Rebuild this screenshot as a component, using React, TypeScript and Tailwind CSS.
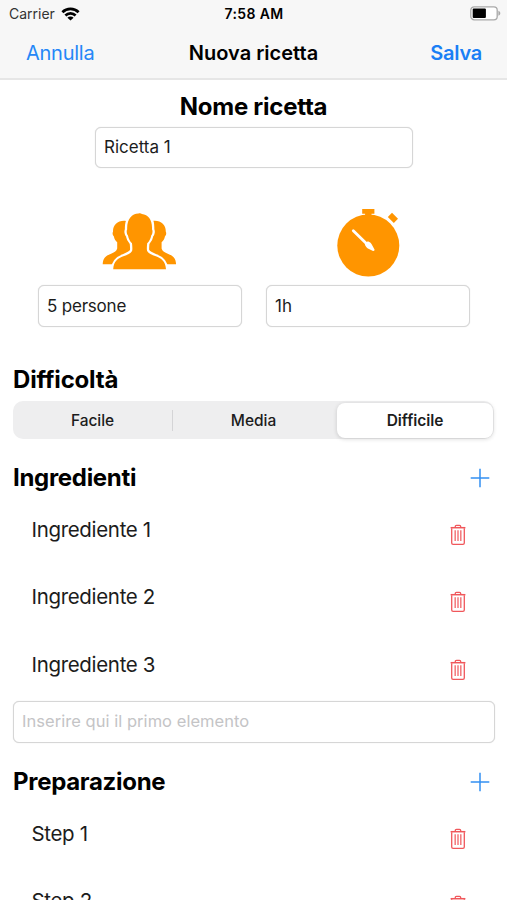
import React from "react";

function WifiIcon() {
  return (
    <svg width="19" height="14" viewBox="0 0 18 14" fill="none" stroke="#000" strokeWidth="2.7">
      <path d="M0.9 5.2a11.5 11.5 0 0 1 16.2 0" />
      <path d="M3.9 8.500a7.2 7.2 0 0 1 10.2 0" />
      <path d="M9 13.6L5.9 10.7a4.4 4.4 0 0 1 6.2 0z" fill="#000" stroke="none" />
    </svg>
  );
}

function BatteryIcon() {
  return (
    <svg width="31" height="15" viewBox="0 0 31 15">
      <rect x="0.8" y="0.8" width="26.4" height="13" rx="3.4" fill="#fff" stroke="#a9a9a9" strokeWidth="1.3" />
      <rect x="2.7" y="2.6" width="13.2" height="9.4" rx="1" fill="#000" />
      <path d="M28.4 4.8c1.2.4 1.9 1.3 1.9 2.5s-.7 2.1-1.9 2.5z" fill="#a9a9a9" />
    </svg>
  );
}

const SIDE_FIGURE =
  "M24 8.900C16 8 10.800 12.500 11 19.800c-.8.900-.4 3.700.9 4.700.4 2.400 1.500 4.200 3.300 5.700v6.300c-.7 2.700-2.700 3.700-5.600 4.900C4.700 43.300.9 45.500.7 52.300H34V12z";

function PeopleIcon() {
  return (
    <svg width="76" height="58" viewBox="0 0 76 58" fill="#ff9500">
      <path d={SIDE_FIGURE} />
      <path d={SIDE_FIGURE} transform="translate(74.8 0) scale(-1 1)" />
      <path
        d="M36.500 1.500c1-.6 2.600-.5 3.400.6C46.500 3 50.500 8 50 17.500c.9 1 .6 4.700-.8 5.900-.5 3.300-1.900 5.600-4 7.900-.3 2.700-.6 5.800-.1 7.700 1.700 2.800 5 3.900 8.700 5.300 5.300 2 9.700 4.700 10.200 13H11.200c.5-8.300 4.900-11 10.200-13 3.700-1.400 7-2.500 8.700-5.300.5-1.900.2-5-.1-7.700-2.100-2.300-3.500-4.600-4-7.900-1.400-1.200-1.700-4.900-.8-5.900C24.700 7.500 29.500 1.800 36.500 1.500z"
        stroke="#fff"
        strokeWidth="4.6"
        strokeLinejoin="round"
        paintOrder="stroke"
      />
    </svg>
  );
}

function StopwatchIcon() {
  return (
    <svg width="64" height="70" viewBox="0 0 64 70" fill="#ff9500">
      <path d="M26.200 1h12.200v4.800h-2.900v3.400h-6.400V5.800h-2.900z" />
      <path d="M51.800 8.900l4.200-4.200 6 6-4.200 4.200z" />
      <circle cx="32.300" cy="37.500" r="31" />
      <path d="M17.300 22.700L34.500 39.500" stroke="#fff" strokeWidth="2.8" strokeLinecap="round" />
      <path d="M28.800 36.200l3-3c2.200.8 3.700 2 4.400 4.100l2.300 4.200c.3.900-.5 1.700-1.500 1.400l-4-2c-2.200-.8-3.600-2.500-4.200-4.700z" fill="#fff" />
    </svg>
  );
}

function PlusIcon() {
  return (
    <svg width="20" height="20" viewBox="0 0 20 20" stroke="#3390f2" strokeWidth="1.5">
      <path d="M10 .7v18.600M.7 10h18.600" />
    </svg>
  );
}

function TrashIcon() {
  return (
    <svg width="16" height="22" viewBox="0 0 16 22" fill="none" stroke="#f0575b">
      <path d="M1.700 4.300V19c0 .9.500 1.300 1.400 1.300h9.800c.9 0 1.400-.4 1.400-1.300V4.300" strokeWidth="1.300" />
      <path d="M.6 3.700h14.800" strokeWidth="1.500" />
      <path d="M5.300 3.300V2.500c0-.8.400-1.200 1.200-1.200h3c.8 0 1.200.4 1.200 1.200v.8" strokeWidth="1.300" />
      <path d="M5.200 6.300v10.800M8 6.300v10.800M10.800 6.300v10.800" strokeWidth="1.500" strokeOpacity="0.8" />
    </svg>
  );
}

function Field({ value, placeholder, className }: { value?: string; placeholder?: string; className: string }) {
  return (
    <div
      className={`flex items-center rounded-[6px] border border-[#d6d6d6] bg-white pl-[8px] shadow-[0_0_1px_#d0d0d0] ${className}`}
    >
      {value ? (
        <span className="text-[17px] text-[#1c1c1c]">{value}</span>
      ) : (
        <span className="pb-px text-[16.500px] tracking-[0.04px] text-[#c4c4c6]">{placeholder}</span>
      )}
    </div>
  );
}

function SectionHeader({ title }: { title: string }) {
  return (
    <div className="flex h-[41px] items-center justify-between pr-[4px]">
      <h2 className="text-[24px] font-bold tracking-[-0.3px]">{title}</h2>
      <button type="button" aria-label="Aggiungi">
        <PlusIcon />
      </button>
    </div>
  );
}

function Row({ label }: { label: string }) {
  return (
    <li className="flex h-[67.5px] shrink-0 justify-between pl-[18.500px] pr-[28px]">
      <span className="pt-[16px] text-[20.500px] leading-[30px] tracking-[-0.33px] text-[#1c1c1c]">{label}</span>
      <button type="button" aria-label="Elimina" className="mt-[25px] h-[22px]">
        <TrashIcon />
      </button>
    </li>
  );
}

export default function App() {
  return (
    <div className="flex h-[900px] w-[507px] flex-col overflow-hidden bg-white font-['Inter',sans-serif] text-black">
      <header className="h-[80px] shrink-0 border-b-2 border-[#e6e6e6] bg-[#f7f7f7]">
        <div className="grid h-[27px] grid-cols-3 items-center pl-[9px] pr-[6px] text-[14px]">
          <div className="flex items-center gap-[6px] text-[#333]">
            <span>Carrier</span>
            <WifiIcon />
          </div>
          <span className="pr-[2px] text-center font-semibold tracking-[0.38px]">7:58 AM</span>
          <div className="flex justify-end">
            <BatteryIcon />
          </div>
        </div>
        <div className="grid h-[51px] grid-cols-3 items-center px-[25px] text-[20px]">
          <button type="button" className="pl-px text-left tracking-[-0.25px] text-[#2587f7]">Annulla</button>
          <h1 className="text-center font-semibold whitespace-nowrap">Nuova ricetta</h1>
          <button type="button" className="text-right font-semibold tracking-[-0.25px] text-[#1a7ff5]">Salva</button>
        </div>
      </header>

      <main className="flex flex-col px-[13px] pt-[9px]">
        <h2 className="text-center text-[24px] leading-[36px] font-bold tracking-[-0.25px]">Nome ricetta</h2>
        <Field value="Ricetta 1" className="mt-[2px] ml-[82px] h-[41px] w-[318px]" />

        <div className="mt-[39px] ml-[25px] flex gap-[24px]">
          <div className="flex flex-col items-center">
            <div className="flex h-[78px] items-start pt-[5px]">
              <PeopleIcon />
            </div>
            <Field value="5 persone" className="h-[42px] w-[204px] pt-px pl-[7.500px] tracking-[-0.2px]" />
          </div>
          <div className="flex flex-col items-center">
            <div className="flex h-[78px] items-start pt-px">
              <StopwatchIcon />
            </div>
            <Field value="1h" className="h-[42px] w-[204px] pt-px" />
          </div>
        </div>

        <h2 className="mt-[34px] text-[24px] leading-[38px] font-bold tracking-[-0.2px]">Difficoltà</h2>
        <div className="mt-[2px] flex h-[38px] w-[481px] items-center rounded-[10px] bg-[#eeeeef] text-[15.500px] font-medium tracking-[-0.05px] text-[#1c1c1c]">
          <span className="w-[159px] pt-px text-center">Facile</span>
          <span className="h-[21px] w-px bg-[#d4d4d6]" />
          <span className="w-[161px] pt-px text-center">Media</span>
          <span className="ml-[3px] flex h-[35px] w-[156px] items-center justify-center rounded-[8px] bg-white pt-px font-semibold shadow-[0_1px_4px_rgba(0,0,0,0.16)]">
            Difficile
          </span>
        </div>

        <section className="mt-[18.750px]">
          <SectionHeader title="Ingredienti" />
          <ul>
            <Row label="Ingrediente 1" />
            <Row label="Ingrediente 2" />
            <Row label="Ingrediente 3" />
          </ul>
          <Field placeholder="Inserire qui il primo elemento" className="h-[42px] w-[482px]" />
        </section>

        <section className="mt-[18.500px]">
          <SectionHeader title="Preparazione" />
          <ul>
            <Row label="Step 1" />
            <Row label="Step 2" />
          </ul>
        </section>
      </main>
    </div>
  );
}
